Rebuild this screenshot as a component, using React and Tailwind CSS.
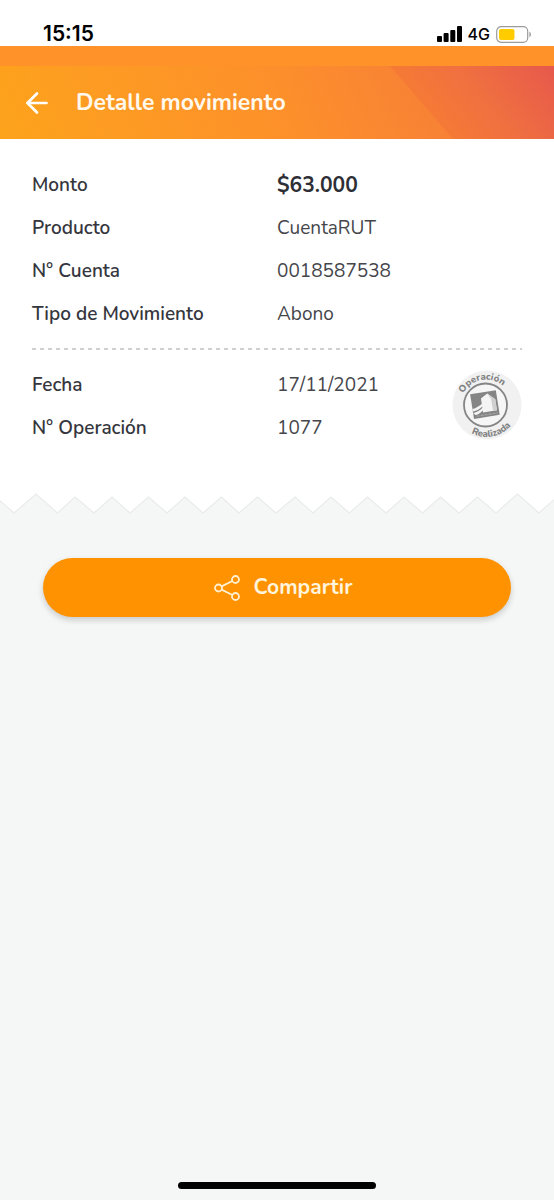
import { ArrowLeft } from 'lucide-react';

const accountRows = [
    { label: 'Monto', value: '$63.000', highlight: true },
    { label: 'Producto', value: 'CuentaRUT' },
    { label: 'N° Cuenta', value: '0018587538' },
    { label: 'Tipo de Movimiento', value: 'Abono' }
];

const operationRows = [
    { label: 'Fecha', value: '17/11/2021' },
    { label: 'N° Operación', value: '1077' }
];

const StatusBar = () => (
    <div className="flex h-[46px] items-end justify-between bg-white pl-[43px] pr-[22px] font-['Inter',sans-serif] text-black">
        <span className="text-[21px] font-semibold leading-6">15:15</span>
        <div className="flex h-6 items-center gap-[6px]">
            <svg width="25" height="16" viewBox="0 0 25 16" aria-hidden="true">
                <rect x="0" y="10" width="5" height="6" rx="1" />
                <rect x="6.6" y="7" width="5" height="9" rx="1" />
                <rect x="13.3" y="4" width="5" height="12" rx="1" />
                <rect x="20" y="0" width="5" height="16" rx="1" />
            </svg>
            <span className="text-base font-medium">4G</span>
            <svg width="36" height="17" viewBox="0 0 36 17" aria-hidden="true">
                <rect x="0.7" y="0.7" width="31" height="15.6" rx="4.5" fill="#fff" stroke="#9b9b9b" strokeWidth="1.2" />
                <rect x="3" y="3" width="15.5" height="11" rx="2" fill="#ffcc00" />
                <path d="M33.4 5.8c2 .6 2 4.8 0 5.4z" fill="#9b9b9b" />
            </svg>
        </div>
    </div>
);

const Header = () => (
    <header className="bg-[#ff9329] pt-5">
        <div className="relative flex h-[73px] items-center gap-[26px] bg-linear-65 from-[#fda31b] via-[#fd902a] to-[#f3743c] px-6">
            <svg
                className="absolute inset-y-0 right-0 h-full w-[164px]"
                viewBox="0 0 164 73"
                preserveAspectRatio="none"
                aria-hidden="true"
            >
                <defs>
                    <linearGradient id="corner" gradientUnits="userSpaceOnUse" x1="50" y1="70" x2="150" y2="-10">
                        <stop offset="0" stopColor="#f67b34" />
                        <stop offset="0.45" stopColor="#f07040" />
                        <stop offset="1" stopColor="#e75a4b" />
                    </linearGradient>
                </defs>
                <path d="M0 0H164V73H63Z" fill="url(#corner)" />
            </svg>
            <button type="button" aria-label="Volver" className="text-white">
                <ArrowLeft className="h-[26px] w-[26px] scale-125" strokeWidth={2} />
            </button>
            <h1 className="relative text-[23px] font-bold leading-8 text-[#fff8ec]">Detalle movimiento</h1>
        </div>
    </header>
);

const DetailList = ({ rows, className = '' }) => (
    <dl className={className}>
        {rows.map((row) => (
            <div key={row.label} className="grid h-[43px] grid-cols-2 items-center">
                <dt className="text-[19px] font-semibold text-[#35363d]">{row.label}</dt>
                <dd className={row.highlight ? 'text-[21px] font-bold text-[#2e2f36]' : 'text-[19px] text-[#45464b]'}>
                    {row.value}
                </dd>
            </div>
        ))}
    </dl>
);

const Stamp = () => (
    <svg width="70" height="70" viewBox="0 0 70 70" role="img" aria-label="Operación Realizada">
        <defs>
            <path id="stampTop" d="M8.5 35a25.5 25.5 0 0 1 51 0" />
            <path id="stampBottom" d="M2.5 35a32 32 0 0 0 64 0" />
        </defs>
        <circle cx="35" cy="35" r="34.5" fill="#f1f1f1" />
        <circle cx="33.5" cy="35" r="21.5" fill="#f6f6f6" stroke="#858585" strokeWidth="1.8" />
        <g transform="rotate(-9 33 35)">
            <rect x="20" y="22" width="26" height="25" fill="#858585" />
            <path d="M30 28l7-4 7 7v11H30z" fill="#f4f4f4" />
            <path d="M37 24l7 7v11h-4V30z" fill="#cfcfcf" />
            <path d="M20 37c4 0 7-2 11-4v2.5c-4 3-7 4-11 4zM20 41c4 0 6-1 11-4v2.5c-4 3-7 4-9 4z" fill="#f4f4f4" />
            <path d="M23 44.8h21" stroke="#a5a5a5" strokeWidth="1.2" strokeDasharray="3 1" />
        </g>
        <g fill="#828282" fontSize="9.5" fontWeight="800">
            <text textAnchor="middle">
                <textPath href="#stampTop" startOffset="44%">Operación</textPath>
            </text>
            <text textAnchor="middle">
                <textPath href="#stampBottom" startOffset="56%">Realizada</textPath>
            </text>
        </g>
    </svg>
);

// Torn lower edge of the receipt
const TornEdge = () => (
    <svg className="block h-[22px] w-full" viewBox="0 0 554 22" preserveAspectRatio="none" aria-hidden="true">
        <path
            d="M-2 6L14 20 36 1 57.5 20 75 4 94 20 112 4 130 20 148.5 4 167 20 185 4 203 20 221.5 4 239 20 257.5 4 276 20 295 4 313 20 331 4 349.5 20 367.5 4 386 20 404 4 422.5 20 440.5 4 459 20 477.5 4 496 20 517.5 1 539 20 556 5V-2H-2Z"
            fill="#fff"
            stroke="#e9ebeb"
            strokeWidth="1.2"
        />
    </svg>
);

const ShareIcon = () => (
    <svg width="26" height="26" viewBox="0 0 26 26" fill="none" stroke="#fff0d0" strokeWidth="1.8" aria-hidden="true">
        <circle cx="4.5" cy="13" r="3.5" />
        <circle cx="21.5" cy="4.5" r="3.5" />
        <circle cx="21.5" cy="21.5" r="3.5" />
        <path d="M7.6 11.4L18.4 6M7.6 14.6L18.4 20" />
    </svg>
);

const App = () => {
    return (
        <div className="flex min-h-screen flex-col bg-[#f5f7f7] font-['Nunito','Open_Sans',sans-serif]">
            <StatusBar />
            <Header />

            <main className="flex-1">
                <section className="bg-white px-8 pb-[43px] pt-[25px]">
                    <DetailList rows={accountRows} />
                    <div className="mb-[14px] mt-3 h-[2px] bg-[repeating-linear-gradient(90deg,#d0d0d0_0_4px,transparent_4px_8px)]" />
                    <div className="grid">
                        <DetailList rows={operationRows} className="col-start-1 row-start-1" />
                        <div className="col-start-1 row-start-1 justify-self-end pt-[6px]">
                            <Stamp />
                        </div>
                    </div>
                </section>
                <TornEdge />

                <div className="px-[43px] pt-[43px]">
                    <button
                        type="button"
                        className="flex h-[59px] w-full items-center justify-center gap-[14px] rounded-full bg-[#ff9200] pl-3 text-[21px] font-bold text-[#fff4dc] shadow-[0_3px_6px_rgba(0,0,0,0.18)]"
                    >
                        <ShareIcon />
                        Compartir
                    </button>
                </div>
            </main>

            <div className="flex justify-center pb-[11px]">
                <div className="h-[7px] w-[198px] rounded-full bg-black" />
            </div>
        </div>
    );
};

export default App;
